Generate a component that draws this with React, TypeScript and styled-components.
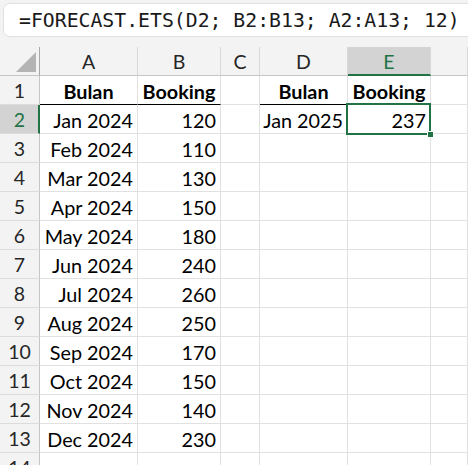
import React from "react";
import styled, { createGlobalStyle, css } from "styled-components";

const GREEN = "#217346";

const Global = createGlobalStyle`
  html, body { margin: 0; padding: 0; background: #ffffff; overflow: hidden; }
  #root { width: 468px; height: 465px; overflow: hidden; }
`;

const Page = styled.div`
  display: flex;
  flex-direction: column;
  width: 468px;
  height: 465px;
  overflow: hidden;
  font-family: Lato, "Open Sans", sans-serif;
`;

const FormulaArea = styled.div`
  flex-shrink: 0;
  background: #f3f3f3;
  padding: 3px 0 10px 3px;
  height: 47px;
  box-sizing: border-box;
  display: flex;
`;

const FormulaBox = styled.div`
  flex: 1;
  margin-right: -12px;
  background: #ffffff;
  border: 1px solid #e0e0e0;
  border-radius: 7px;
  display: flex;
  align-items: center;
  padding-left: 15px;
  font-family: "DejaVu Sans Mono", "Liberation Mono", monospace;
  font-size: 19.8px;
  color: #1a1a1a;
  white-space: nowrap;
`;

const Sheet = styled.div`
  flex-shrink: 0;
  display: grid;
  grid-template-columns: 40px 98px 83px 39px 88px 83px 1fr;
  grid-template-rows: 29px;
  grid-auto-rows: 29px;
  background: #ffffff;
`;

const ColHead = styled.div<{ $active?: boolean }>`
  box-sizing: border-box;
  background: ${(p) => (p.$active ? "#d3d3d3" : "#f3f3f3")};
  border-right: 1px solid #d8d8d8;
  border-bottom: ${(p) => (p.$active ? `2px solid ${GREEN}` : "1px solid #c6c6c6")};
  display: flex;
  align-items: center;
  justify-content: center;
  font-size: 19.5px;
  color: ${(p) => (p.$active ? GREEN : "#262626")};
  padding-top: ${(p) => (p.$active ? "1px" : "0")};
`;

const Corner = styled.div`
  box-sizing: border-box;
  background: #f3f3f3;
  border-right: 1px solid #a8a8a8;
  border-bottom: 1px solid #c6c6c6;
  display: flex;
  align-items: flex-end;
  justify-content: flex-end;
  padding: 0 3px 3px 0;
`;

const Triangle = styled.div`
  width: 0;
  height: 0;
  border-left: 20px solid transparent;
  border-bottom: 20px solid #b4b4b4;
`;

const RowHead = styled.div<{ $active?: boolean }>`
  box-sizing: border-box;
  background: ${(p) => (p.$active ? "#d3d3d3" : "#f3f3f3")};
  border-right: ${(p) => (p.$active ? `2px solid ${GREEN}` : "1px solid #c6c6c6")};
  border-bottom: 1px solid #dcdcdc;
  display: flex;
  align-items: center;
  justify-content: center;
  font-size: 19.5px;
  color: ${(p) => (p.$active ? GREEN : "#262626")};
  padding-left: ${(p) => (p.$active ? "1px" : "0")};
`;

const Cell = styled.div<{
  $align?: "left" | "right" | "center";
  $bold?: boolean;
  $underline?: boolean;
  $selected?: boolean;
}>`
  position: relative;
  box-sizing: border-box;
  border-right: 1px solid #e1e1e1;
  border-bottom: 1px solid ${(p) => (p.$underline ? "#000000" : "#e1e1e1")};
  display: flex;
  align-items: center;
  justify-content: ${(p) =>
    p.$align === "right" ? "flex-end" : p.$align === "center" ? "center" : "flex-start"};
  padding: 1px 4px 0 4px;
  font-size: 19.8px;
  font-weight: ${(p) => (p.$bold ? 700 : 400)};
  color: #000000;
  white-space: nowrap;
  ${(p) =>
    p.$selected &&
    css`
      z-index: 2;
      &::before {
        content: "";
        position: absolute;
        left: -2px;
        top: -2px;
        right: -1px;
        bottom: -2px;
        border: 2px solid ${GREEN};
        pointer-events: none;
      }
      &::after {
        content: "";
        position: absolute;
        right: -4px;
        bottom: -5px;
        width: 5px;
        height: 5px;
        background: ${GREEN};
        border: 1px solid #ffffff;
      }
    `}
`;

const CellText = styled.span`
  position: relative;
  z-index: 1;
`;

const months = [
  ["Jan 2024", 120],
  ["Feb 2024", 110],
  ["Mar 2024", 130],
  ["Apr 2024", 150],
  ["May 2024", 180],
  ["Jun 2024", 240],
  ["Jul 2024", 260],
  ["Aug 2024", 250],
  ["Sep 2024", 170],
  ["Oct 2024", 150],
  ["Nov 2024", 140],
  ["Dec 2024", 230],
] as const;

const cols = ["A", "B", "C", "D", "E"];

export default function App() {
  const rows: React.ReactNode[] = [];
  for (let r = 1; r <= 14; r++) {
    const cells: React.ReactNode[] = [];
    cells.push(
      <RowHead key={`h${r}`} $active={r === 2}>
        {r}
      </RowHead>
    );
    let a = "";
    let b = "";
    let d = "";
    let e = "";
    if (r === 1) {
      a = "Bulan";
      b = "Booking";
      d = "Bulan";
      e = "Booking";
    } else if (r >= 2 && r <= 13) {
      a = months[r - 2][0];
      b = String(months[r - 2][1]);
    }
    if (r === 2) {
      d = "Jan 2025";
      e = "237";
    }
    const header = r === 1;
    cells.push(
      <Cell key={`a${r}`} $align={header ? "center" : "right"} $bold={header} $underline={header}>
        <CellText>{a}</CellText>
      </Cell>
    );
    cells.push(
      <Cell key={`b${r}`} $align={header ? "center" : "right"} $bold={header} $underline={header}>
        <CellText>{b}</CellText>
      </Cell>
    );
    cells.push(<Cell key={`c${r}`} />);
    cells.push(
      <Cell key={`d${r}`} $align={header ? "center" : "right"} $bold={header} $underline={header}>
        <CellText>{d}</CellText>
      </Cell>
    );
    cells.push(
      <Cell
        key={`e${r}`}
        $align={header ? "center" : "right"}
        $bold={header}
        $underline={header}
        $selected={r === 2}
      >
        <CellText>{e}</CellText>
      </Cell>
    );
    cells.push(<Cell key={`f${r}`} />);
    rows.push(<React.Fragment key={`r${r}`}>{cells}</React.Fragment>);
  }

  return (
    <Page>
      <Global />
      <FormulaArea>
        <FormulaBox>=FORECAST.ETS(D2; B2:B13; A2:A13; 12)</FormulaBox>
      </FormulaArea>
      <Sheet>
        <Corner>
          <Triangle />
        </Corner>
        {cols.map((c) => (
          <ColHead key={c} $active={c === "E"}>
            {c}
          </ColHead>
        ))}
        <ColHead />
        {rows}
      </Sheet>
    </Page>
  );
}
